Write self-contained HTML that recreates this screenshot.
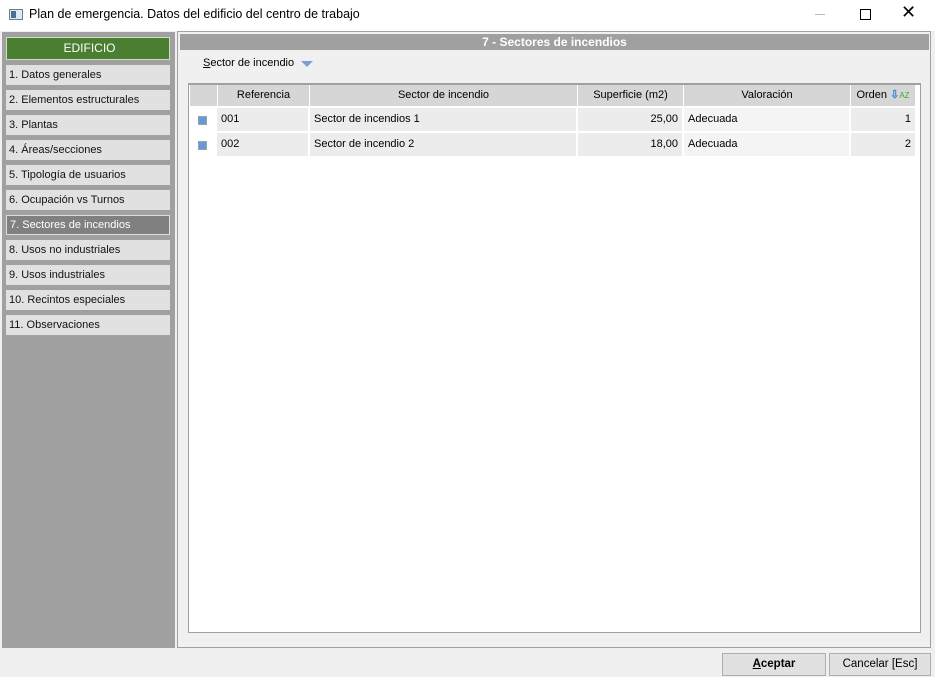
<!DOCTYPE html>
<html><head><style>
*{margin:0;padding:0;box-sizing:border-box}
body{width:935px;height:677px;background:#f0f0f0;font-family:"Liberation Sans",sans-serif;font-size:12px;color:#000;position:relative;overflow:hidden}
.a{position:absolute}
.title{left:0;top:0;width:935px;height:31px;background:#fff}
.left{left:2px;top:32px;width:173px;height:616px;background:#a0a0a0}
.item{position:absolute;left:4px;width:164px;height:20px;background:#e1e1e1;padding-left:3px;line-height:20px;font-size:11px;color:#111}
.right{left:177px;top:31px;width:754px;height:617px;border:1px solid #a0a0a0;background:#f0f0f0}
.c{position:absolute;height:23px;line-height:23px;background:#ececec;padding:0 4px;font-size:11px;white-space:nowrap}
.h{position:absolute;top:0;height:21px;line-height:21px;background:#d6d6d6;text-align:center;font-size:11px;border-left:1px solid #fff}
.btn{position:absolute;height:23px;background:#e1e1e1;border:1px solid #adadad;text-align:center;line-height:21px;font-size:11.5px}
.sq{position:absolute;left:8px;top:8px;width:9px;height:9px;background:#6d95d8;border:1px solid #8aa}
</style></head><body>
<div class="a title">
 <div class="a" style="left:9px;top:9px;width:14px;height:11px;border:1px solid #6a7f95;background:#dfe7ef"><div class="a" style="left:1px;top:1px;width:5px;height:7px;background:#4c6f96"></div></div>
 <div class="a" style="left:29px;top:7px;font-size:12.5px">Plan de emergencia. Datos del edificio del centro de trabajo</div>
 <div class="a" style="left:815px;top:14px;width:10px;height:1px;background:#bbb"></div>
 <div class="a" style="left:860px;top:9px;width:11px;height:11px;border:1px solid #000"></div>
 <div class="a" style="left:901px;top:2px;font-size:18px">✕</div>
</div>
<div class="a left">
 <div class="item" style="top:5px;height:23px;background:#4a7f32;color:#fff;text-align:center;line-height:21px;border:1px solid #cfe0c0;font-size:12px">EDIFICIO</div>
 <div class="item" style="top:33px">1. Datos generales</div>
 <div class="item" style="top:58px">2. Elementos estructurales</div>
 <div class="item" style="top:83px">3. Plantas</div>
 <div class="item" style="top:108px">4. Áreas/secciones</div>
 <div class="item" style="top:133px">5. Tipología de usuarios</div>
 <div class="item" style="top:158px">6. Ocupación vs Turnos</div>
 <div class="item" style="top:183px;background:#808080;color:#fff;border:1px solid #ddd;line-height:18px">7. Sectores de incendios</div>
 <div class="item" style="top:208px">8. Usos no industriales</div>
 <div class="item" style="top:233px">9. Usos industriales</div>
 <div class="item" style="top:258px">10. Recintos especiales</div>
 <div class="item" style="top:283px">11. Observaciones</div>
</div>
<div class="a right">
 <div class="a" style="left:2px;top:2px;width:749px;height:16px;background:#a0a0a0;color:#fff;font-weight:bold;text-align:center;line-height:16px;font-size:12px">7 - Sectores de incendios</div>
 <div class="a" style="left:25px;top:25px;font-size:11px"><u>S</u>ector de incendio</div>
 <div class="a" style="left:123px;top:29px;width:0;height:0;border-left:6px solid transparent;border-right:6px solid transparent;border-top:6px solid #7d9fd6"></div>
</div>
<div class="a" style="left:188px;top:83px;width:733px;height:550px;background:#fff;border:1px solid #a0a0a0;border-top:2px solid #a0a0a0">
 <div class="a" style="left:1px;top:0;width:725px;height:22px">
  <div class="h" style="left:0;width:27px;border-left:0"></div>
  <div class="h" style="left:27px;width:92px">Referencia</div>
  <div class="h" style="left:119px;width:268px">Sector de incendio</div>
  <div class="h" style="left:387px;width:106px">Superficie (m2)</div>
  <div class="h" style="left:493px;width:167px">Valoración</div>
  <div class="h" style="left:660px;width:65px">Orden <span style="color:#3b7de0;font-weight:bold">⇩</span><span style="color:#3a3;font-size:8px">AZ</span></div>
 </div>
 <div class="a" style="left:1px;top:23px"><div class="sq"></div></div>
 <div class="c" style="left:28px;top:23px;width:91px">001</div>
 <div class="c" style="left:121px;top:23px;width:266px">Sector de incendios 1</div>
 <div class="c" style="left:389px;top:23px;width:104px;text-align:right">25,00</div>
 <div class="c" style="left:495px;top:23px;width:165px;background:#f4f4f4">Adecuada</div>
 <div class="c" style="left:662px;top:23px;width:64px;text-align:right">1</div>
 <div class="a" style="left:1px;top:48px"><div class="sq"></div></div>
 <div class="c" style="left:28px;top:48px;width:91px">002</div>
 <div class="c" style="left:121px;top:48px;width:266px">Sector de incendio 2</div>
 <div class="c" style="left:389px;top:48px;width:104px;text-align:right">18,00</div>
 <div class="c" style="left:495px;top:48px;width:165px;background:#f4f4f4">Adecuada</div>
 <div class="c" style="left:662px;top:48px;width:64px;text-align:right">2</div>
</div>
<div class="btn" style="left:722px;top:653px;width:104px;font-weight:bold"><u>A</u>ceptar</div>
<div class="btn" style="left:829px;top:653px;width:102px">Cancelar [Esc]</div>
</body></html>
